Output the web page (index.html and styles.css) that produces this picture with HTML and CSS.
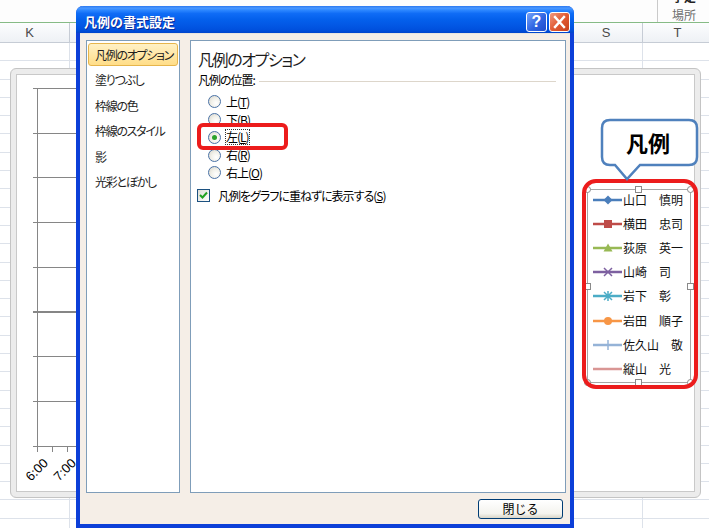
FILE: index.html
```html
<!DOCTYPE html>
<html lang="ja">
<head>
    <meta charset="UTF-8">
    <title>凡例の書式設定</title>
    <link rel="stylesheet" href="styles.css">
</head>
<body>
<div class="screen">
    <!-- spreadsheet behind the dialog -->
    <div class="ribbon">
        <div class="ribbon-group">
            <span class="ribbon-cut">予定</span>
            <span class="ribbon-label">場所</span>
        </div>
    </div>
    <div class="col-header">
        <div class="col col-k">K</div>
        <div class="col col-hidden"></div>
        <div class="col col-s">S</div>
        <div class="col col-t">T</div>
    </div>
    <div class="grid">
        <div class="col col-k"></div>
        <div class="col col-hidden"></div>
        <div class="col col-s"></div>
        <div class="col col-t"></div>
    </div>

    <!-- chart object -->
    <div class="chart">
        <div class="plot"></div>
        <div class="x-ticks"></div>
        <div class="x-labels">
            <span>6:00</span>
            <span>7:00</span>
        </div>

        <div class="legend">
            <span class="handle round h-tl"></span>
            <span class="handle h-tc"></span>
            <span class="handle round h-tr"></span>
            <span class="handle h-ml"></span>
            <span class="handle h-mr"></span>
            <span class="handle round h-bl"></span>
            <span class="handle h-bc"></span>
            <span class="handle round h-br"></span>
            <div class="legend-list">
                <div class="legend-item">
                    <svg viewBox="0 0 29 12"><line x1="0" y1="6" x2="29" y2="6" stroke="#4a7ebb" stroke-width="2.5"/><polygon points="15,1.5 19.5,6 15,10.5 10.5,6" fill="#4a7ebb"/></svg>
                    <span>山口　慎明</span>
                </div>
                <div class="legend-item">
                    <svg viewBox="0 0 29 12"><line x1="0" y1="6" x2="29" y2="6" stroke="#be4b48" stroke-width="2.5"/><rect x="11" y="2" width="8" height="8" fill="#be4b48"/></svg>
                    <span>横田　忠司</span>
                </div>
                <div class="legend-item">
                    <svg viewBox="0 0 29 12"><line x1="0" y1="6" x2="29" y2="6" stroke="#98b954" stroke-width="2.5"/><polygon points="15,1.5 19.5,9.5 10.5,9.5" fill="#98b954"/></svg>
                    <span>荻原　英一</span>
                </div>
                <div class="legend-item">
                    <svg viewBox="0 0 29 12"><line x1="0" y1="6" x2="29" y2="6" stroke="#7d60a0" stroke-width="2.5"/><path d="M11 2 L19 10 M11 10 L19 2" stroke="#7d60a0" stroke-width="1.5"/></svg>
                    <span>山崎　司</span>
                </div>
                <div class="legend-item">
                    <svg viewBox="0 0 29 12"><line x1="0" y1="6" x2="29" y2="6" stroke="#4bacc6" stroke-width="2.5"/><path d="M11 2 L19 10 M11 10 L19 2 M15 1 V11" stroke="#4bacc6" stroke-width="1.5"/></svg>
                    <span>岩下　彰</span>
                </div>
                <div class="legend-item">
                    <svg viewBox="0 0 29 12"><line x1="0" y1="6" x2="29" y2="6" stroke="#f79646" stroke-width="2.5"/><circle cx="15" cy="6" r="4" fill="#f79646"/></svg>
                    <span>岩田　順子</span>
                </div>
                <div class="legend-item">
                    <svg viewBox="0 0 29 12"><line x1="0" y1="6" x2="29" y2="6" stroke="#95b3d7" stroke-width="2.5"/><path d="M15 1 V11" stroke="#95b3d7" stroke-width="1.5"/></svg>
                    <span>佐久山　敬</span>
                </div>
                <div class="legend-item">
                    <svg viewBox="0 0 29 12"><line x1="0" y1="6" x2="29" y2="6" stroke="#d99694" stroke-width="2.5"/></svg>
                    <span>縦山　光</span>
                </div>
            </div>
        </div>
    </div>

    <!-- annotations drawn over the chart -->
    <div class="mark-legend"></div>
    <div class="callout">
        <svg viewBox="0 0 100 66" width="100" height="66">
            <path d="M10 3 H89 Q97 3 97 11 V40 Q97 48 89 48 H40 L27 62 L15 48 H10 Q2 48 2 40 V11 Q2 3 10 3 Z" fill="#fff" stroke="#4f81bd" stroke-width="2.5"/>
            <text x="48" y="25" class="callout-text">凡例</text>
        </svg>
    </div>

    <!-- format legend dialog -->
    <div class="dialog">
        <div class="titlebar">
            <span class="title">凡例の書式設定</span>
            <span class="tb-btn tb-help">?</span>
            <span class="tb-btn tb-close">
                <svg viewBox="0 0 19 18" width="19" height="18"><path d="M5 4 L14 14 M14 4 L5 14" stroke="#fff" stroke-width="2.4" stroke-linecap="square"/></svg>
            </span>
        </div>
        <div class="dialog-body">
            <div class="panels">
                <div class="nav">
                    <div class="nav-item active">凡例のオプション</div>
                    <div class="nav-item">塗りつぶし</div>
                    <div class="nav-item">枠線の色</div>
                    <div class="nav-item">枠線のスタイル</div>
                    <div class="nav-item">影</div>
                    <div class="nav-item">光彩とぼかし</div>
                </div>
                <div class="options">
                    <h1>凡例のオプション</h1>
                    <div class="group-label">
                        <span>凡例の位置:</span>
                        <span class="group-line"></span>
                    </div>
                    <div class="radio-list">
                        <div class="radio-row"><span class="radio"></span><span>上(<u>T</u>)</span></div>
                        <div class="radio-row"><span class="radio"></span><span>下(<u>B</u>)</span></div>
                        <div class="radio-row"><span class="radio checked"></span><span class="focus">左(<u>L</u>)</span></div>
                        <div class="radio-row"><span class="radio"></span><span>右(<u>R</u>)</span></div>
                        <div class="radio-row"><span class="radio"></span><span>右上(<u>O</u>)</span></div>
                    </div>
                    <div class="check-row">
                        <span class="checkbox">
                            <svg viewBox="0 0 11 11" width="11" height="11"><path d="M2 5 L4.5 7.5 L9 2.5" fill="none" stroke="#21a121" stroke-width="2"/></svg>
                        </span>
                        <span>凡例をグラフに重ねずに表示する(<u>S</u>)</span>
                    </div>
                    <div class="mark-option"></div>
                </div>
            </div>
            <div class="dialog-footer">
                <button class="btn-close">閉じる</button>
            </div>
        </div>
    </div>
</div>
</body>
</html>
```

FILE: styles.css
```css
/* reset */
* {
    box-sizing: border-box;
    margin: 0;
    padding: 0;
}

body {
    width: 709px;
    height: 528px;
    overflow: hidden;
    background: #fff;
    font-family: "Noto Sans CJK JP", "Noto Sans", sans-serif;
    font-size: 12px;
    color: #000;
}

.screen {
    position: relative;
    width: 709px;
    height: 528px;
    overflow: hidden;
}

/* Excel sheet in the background */
.ribbon {
    height: 23px;
    display: flex;
    justify-content: flex-end;
    background: #fdfdfd;
    border-bottom: 1px solid #86bb86;
}

.ribbon-group {
    width: 52px;
    display: flex;
    flex-direction: column;
    padding-left: 14px;
    border-left: 1px solid #cacaca;
}

.ribbon-cut {
    margin-top: -9px;
    height: 12px;
    line-height: 12px;
    font-weight: bold;
    color: #222;
}

.ribbon-label {
    margin-top: 6px;
    line-height: 12px;
    color: #6d6d6d;
}

.col-header {
    display: flex;
    height: 20px;
    background: linear-gradient(#fcfdfe, #eef1f5);
    border-bottom: 1px solid #c6ccd5;
    font-family: "Liberation Sans", sans-serif;
    font-size: 13px;
    line-height: 19px;
    color: #4a4a4a;
}

.col {
    flex: none;
    text-align: center;
    border-right: 1px solid #c6ccd5;
}

.col-k { width: 70px; padding-right: 10px; }
.col-hidden { width: 500px; }
.col-s { width: 73px; }
.col-t { width: 70px; }

.grid {
    display: flex;
    height: 485px;
    background: repeating-linear-gradient(to bottom, transparent 0 17.3px, #dde2ea 17.3px 18.3px);
}

.grid .col {
    border-right-color: #dde2ea;
}

/* chart */
.chart {
    position: absolute;
    left: 10px;
    top: 68px;
    width: 691px;
    height: 430px;
    padding: 19px 0 0 22px;
    background: #fff;
    border: 1px solid #c4c4c4;
    border-radius: 6px;
    box-shadow: inset 0 0 0 5px #ececec, inset 0 0 0 6px #c9c9c9;
}

.plot {
    width: 500px;
    height: 359px;
    background:
        linear-gradient(to right, transparent 4px, #868686 4px 5px, transparent 5px),
        repeating-linear-gradient(to bottom, #868686 0 1px, transparent 1px 44.7px);
}

.x-ticks {
    width: 480px;
    height: 5px;
    margin-left: 4px;
    background: repeating-linear-gradient(to right, #868686 0 1px, transparent 1px 15px);
}

.x-labels {
    display: flex;
    margin: 11px 0 0 -10px;
    font-family: "Liberation Sans", sans-serif;
    font-size: 13px;
}

.x-labels span {
    width: 28px;
    line-height: 14px;
    text-align: center;
    transform: rotate(-45deg);
}

/* legend */
.legend {
    position: absolute;
    left: 576px;
    top: 120px;
    width: 104px;
    height: 194px;
    padding-left: 5px;
    border: 1px solid #a6a6a6;
}

.legend-list {
    margin-top: -2px;
}

.legend-item {
    display: flex;
    align-items: center;
    height: 24.1px;
    line-height: 14px;
    white-space: nowrap;
    color: #111;
}

.legend-item svg {
    flex: none;
    width: 29px;
    height: 12px;
    margin-right: 1px;
}

.handle {
    position: absolute;
    width: 7px;
    height: 7px;
    background: #fff;
    border: 1px solid #8a8a8a;
}

.handle.round { border-radius: 50%; }
.h-tl { left: -4px; top: -4px; }
.h-tc { left: 47px; top: -4px; }
.h-tr { right: -4px; top: -4px; }
.h-ml { left: -4px; top: 93px; }
.h-mr { right: -4px; top: 93px; }
.h-bl { left: -4px; bottom: -4px; }
.h-bc { left: 47px; bottom: -4px; }
.h-br { right: -4px; bottom: -4px; }

/* red highlight and callout */
.mark-legend {
    position: absolute;
    left: 582px;
    top: 179px;
    width: 116px;
    height: 210px;
    border: 4px solid #ec1c1c;
    border-radius: 14px;
}

.callout {
    position: absolute;
    left: 600px;
    top: 117px;
    width: 100px;
    height: 66px;
}

.callout svg {
    display: block;
}

.callout-text {
    font-family: "Noto Sans CJK JP", sans-serif;
    font-size: 22px;
    font-weight: bold;
    text-anchor: middle;
    dominant-baseline: central;
    fill: #000;
}

/* dialog window */
.dialog {
    position: absolute;
    left: 76px;
    top: 6px;
    width: 498px;
    height: 522px;
    display: flex;
    flex-direction: column;
    background: #f5eee7;
    border: 4px solid #0c3fd8;
    border-top: 0;
    border-radius: 7px 7px 0 0;
}

.titlebar {
    height: 27px;
    margin: 0 -4px;
    display: flex;
    align-items: center;
    padding: 0 4px 0 8px;
    border-radius: 7px 7px 0 0;
    background: linear-gradient(to bottom,
        #2a78f0 0%, #4a98ff 8%, #2b86ff 16%, #0f6cf6 28%,
        #0460ec 50%, #0257e4 72%, #0050dd 88%, #0045cc 100%);
}

.title {
    flex: 1;
    margin-top: 4px;
    font-size: 13px;
    font-weight: bold;
    color: #fff;
    text-shadow: 1px 1px 0 #0a2a9a;
}

.tb-btn {
    width: 21px;
    height: 20px;
    margin-top: 4px;
    display: flex;
    align-items: center;
    justify-content: center;
    border: 1px solid #fff;
    border-radius: 3px;
    color: #fff;
    font-family: "Liberation Sans", sans-serif;
    font-size: 16px;
    font-weight: bold;
}

.tb-help {
    margin-right: 2px;
    background: linear-gradient(135deg, #76a4fa, #2f64e2 55%, #1d4ccc);
}

.tb-close {
    background: linear-gradient(135deg, #f29a80, #e15b34 50%, #c8401a);
}

.dialog-body {
    flex: 1;
    display: flex;
    flex-direction: column;
    padding: 7px 4px 0 6px;
    border-top: 1px solid #e9e4de;
}

.panels {
    display: flex;
    gap: 10px;
    height: 453px;
    margin-top: -1px;
}

.nav {
    width: 94px;
    padding: 2px 1px;
    background: #fff;
    border: 1px solid #7f9db9;
}

.nav-item {
    height: 23px;
    margin-bottom: 2.4px;
    padding-left: 6px;
    line-height: 21px;
    border: 1px solid transparent;
    border-radius: 3px;
    color: #1e1e1e;
    white-space: nowrap;
    letter-spacing: -1.3px;
    font-feature-settings: "palt";
}

.nav-item.active {
    background: linear-gradient(#fff1c6, #ffdd88);
    border-color: #e6b54c;
}

.options {
    position: relative;
    flex: 1;
    padding: 6px 9px 0 7px;
    background: #fff;
    border: 1px solid #7f9db9;
    font-feature-settings: "palt";
    letter-spacing: -1px;
}

.options h1 {
    height: 24px;
    font-size: 16px;
    font-weight: normal;
    line-height: 24px;
    letter-spacing: -1.4px;
    color: #1c1c1c;
}

.group-label {
    display: flex;
    align-items: center;
    gap: 4px;
    height: 18px;
    line-height: 18px;
    letter-spacing: -1px;
}

.group-line {
    flex: 1;
    height: 1px;
    margin-top: 2px;
    background: #ddd6cb;
}

.radio-list {
    margin-top: 4px;
    padding-left: 10px;
}

.radio-row {
    display: flex;
    align-items: center;
    gap: 5px;
    height: 17.75px;
    line-height: 14px;
}

.radio {
    position: relative;
    flex: none;
    width: 13px;
    height: 13px;
    border: 1px solid #4a72a6;
    border-radius: 50%;
    background: radial-gradient(circle at 65% 65%, #fff 0, #f2f1ea 45%, #d5d3c9 100%);
}

.radio.checked::after {
    content: "";
    position: absolute;
    left: 3px;
    top: 3px;
    width: 5px;
    height: 5px;
    border-radius: 50%;
    background: #2aa22a;
}

.focus {
    outline: 1px dotted #333;
    outline-offset: 0;
}

.check-row {
    display: flex;
    align-items: center;
    gap: 8px;
    height: 16px;
    margin: 6px 0 0 -1px;
}

.checkbox {
    display: flex;
    flex: none;
    width: 13px;
    height: 13px;
    border: 1px solid #1c5180;
    background: linear-gradient(135deg, #dcdcd4, #fff);
}

.mark-option {
    position: absolute;
    left: 6px;
    top: 82px;
    width: 91px;
    height: 27px;
    border: 4px solid #ec1c1c;
    border-radius: 6px;
}

.dialog-footer {
    display: flex;
    justify-content: flex-end;
    padding: 6px 3px 0 0;
}

.btn-close {
    width: 85px;
    height: 20px;
    font-family: "Noto Sans CJK JP", sans-serif;
    font-size: 12px;
    line-height: 18px;
    color: #000;
    background: linear-gradient(#ffffff, #f4f3ee 75%, #d9d5c8);
    border: 1px solid #003c74;
    border-radius: 3px;
}
```
